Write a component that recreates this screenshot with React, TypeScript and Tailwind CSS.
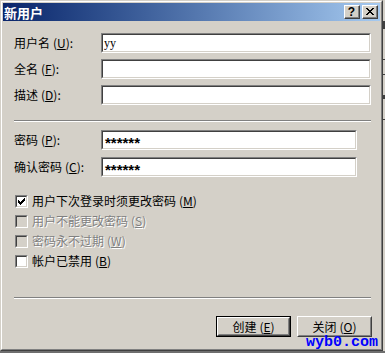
import React from "react";

const font = { fontFamily: '"Noto Sans CJK SC", "Liberation Sans", sans-serif' };

const Key = ({ k }: { k: string }) => (
  <span className="ml-[3px]">
    (<span className="underline underline-offset-1">{k}</span>)
  </span>
);

const Field = ({ label, k, w, value, pw }: { label: string; k: string; w: string; value?: string; pw?: boolean }) => (
  <div className="flex items-center h-[20px]">
    <div className="w-[87px] text-[12px] text-black leading-none">
      {label}
      <Key k={k} />:
    </div>
    <div className={`${w} h-[20px] border border-t-[#808080] border-l-[#808080] border-r-white border-b-white`}>
      <div className="w-full h-full bg-white border border-t-[#404040] border-l-[#404040] border-r-[#d4d0c8] border-b-[#d4d0c8] flex items-center pl-[1px]">
        {pw ? (
          <span className="text-[15px] font-bold leading-none pt-[5px] pl-[1px]" style={{ fontFamily: '"Liberation Sans", sans-serif' }}>
            {value}
          </span>
        ) : (
          <span className="text-[12px] leading-none" style={{ fontFamily: '"Liberation Serif", serif' }}>
            {value}
          </span>
        )}
      </div>
    </div>
  </div>
);

const Check = ({ label, k, checked, disabled }: { label: string; k: string; checked?: boolean; disabled?: boolean }) => (
  <div className="flex items-center h-[20px]">
    <div className="w-[13px] h-[13px] border border-t-[#808080] border-l-[#808080] border-r-white border-b-white">
      <div
        className={`w-full h-full border border-t-[#404040] border-l-[#404040] border-r-[#d4d0c8] border-b-[#d4d0c8] flex items-center justify-center ${
          disabled ? "bg-[#d4d0c8]" : "bg-white"
        }`}
      >
        {checked && (
          <svg width="7" height="7" viewBox="0 0 7 7">
            <path d="M0 2h1v1h1v1h1V3h1V2h1V1h1V0h1v3H6v1H5v1H4v1H3v1H2V6H1V5H0z" fill="#000" />
          </svg>
        )}
      </div>
    </div>
    <div
      className={`ml-[4px] text-[12px] leading-none ${disabled ? "text-[#808080] [text-shadow:1px_1px_0_#fff]" : "text-black"}`}
    >
      {label}
      <Key k={k} />
    </div>
  </div>
);

const Btn = ({ label, k, def }: { label: string; k: string; def?: boolean }) => (
  <div className={`w-[75px] h-[21px] ${def ? "border border-black" : ""}`}>
    <div className="w-full h-full border border-t-white border-l-white border-r-[#404040] border-b-[#404040]">
      <div className="w-full h-full border border-t-[#d4d0c8] border-l-[#d4d0c8] border-r-[#808080] border-b-[#808080] flex items-center justify-center text-[12px] leading-none text-black">
        {label}
        <Key k={k} />
      </div>
    </div>
  </div>
);

const CapBtn = ({ children }: { children: React.ReactNode }) => (
  <div className="w-[16px] h-[14px] bg-[#d4d0c8] border border-t-white border-l-white border-r-[#404040] border-b-[#404040]">
    <div className="w-full h-full border-r border-b border-r-[#808080] border-b-[#808080] flex items-center justify-center">
      {children}
    </div>
  </div>
);

const Sep = ({ w }: { w: string }) => (
  <div className={`${w} h-[2px] border-t border-t-[#808080] border-b border-b-white`} />
);

export default function App() {
  return (
    <div className="w-[385px] h-[353px] bg-[#6e6e6e] relative overflow-hidden" style={font}>
      <div className="absolute right-0 top-0 w-[2px] h-[351px] bg-[#d4d0c8]">
        <div className="mt-[21px] h-[8px] bg-[#404040]" />
        <div className="mt-[30px] h-[1px] bg-[#404040]" />
        <div className="mt-[14px] h-[1px] bg-[#404040]" />
        <div className="mt-[20px] h-[4px] bg-[#404040]" />
        <div className="mt-[20px] h-[1px] bg-[#404040]" />
      </div>
      <div className="w-[383px] h-[351px] bg-[#d4d0c8] border border-t-[#d4d0c8] border-l-[#d4d0c8] border-r-[#404040] border-b-[#404040]">
        <div className="h-full border border-t-white border-l-white border-r-[#808080] border-b-[#808080] p-px flex flex-col">
          <div className="h-[18px] flex items-center justify-between bg-gradient-to-r from-[#0a246a] to-[#a6caf0] pl-[1px] pr-[2px]">
            <span className="text-white font-bold text-[13px] leading-none">新用户</span>
            <div className="flex gap-[2px]">
              <CapBtn>
                <span className="text-[12px] font-bold leading-none text-black" style={{ fontFamily: '"Liberation Sans", sans-serif' }}>
                  ?
                </span>
              </CapBtn>
              <CapBtn>
                <svg width="8" height="7" viewBox="0 0 8 7">
                  <path d="M0 0h2v1h1v1h2V1h1V0h2v1H7v1H6v1H5v1h1v1h1v1h1v1H6V6H5V5H3v1H2v1H0V6h1V5h1V4h1V3H2V2H1V1H0z" fill="#000" />
                </svg>
              </CapBtn>
            </div>
          </div>

          <div className="pl-[11px] pt-[12px] flex flex-col">
            <div className="flex flex-col gap-[6px]">
              <Field label="用户名" k="U" w="w-[270px]" value="yy" />
              <Field label="全名" k="F" w="w-[270px]" />
              <Field label="描述" k="D" w="w-[270px]" />
            </div>
            <div className="mt-[15px]">
              <Sep w="w-[357px]" />
            </div>
            <div className="mt-[8px] flex flex-col gap-[7px]">
              <Field label="密码" k="P" w="w-[256px]" value="******" pw />
              <Field label="确认密码" k="C" w="w-[256px]" value="******" pw />
            </div>
            <div className="mt-[14px] pl-[1px] flex flex-col">
              <Check label="用户下次登录时须更改密码" k="M" checked />
              <Check label="用户不能更改密码" k="S" disabled />
              <Check label="密码永不过期" k="W" disabled />
              <Check label="帐户已禁用" k="B" />
            </div>
            <div className="mt-[26px]">
              <Sep w="w-[357px]" />
            </div>
            <div className="mt-[17px] flex justify-end gap-[6px] pr-[8px]">
              <Btn label="创建" k="E" def />
              <Btn label="关闭" k="O" />
            </div>
          </div>
        </div>
      </div>
      <div
        className="absolute left-[306px] top-[338px] text-[15px] font-bold leading-[10px] text-[#0000ff]"
        style={{ fontFamily: '"Liberation Mono", monospace' }}
      >
        wyb0.com
      </div>
    </div>
  );
}
